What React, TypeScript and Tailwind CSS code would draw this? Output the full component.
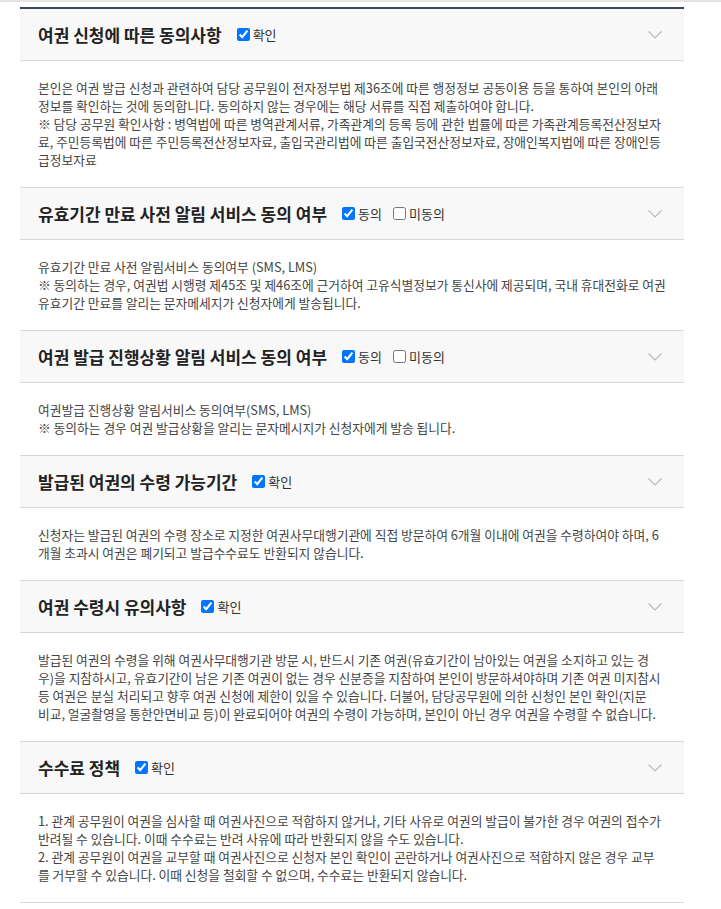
import React from "react";

type Option = { label: string; checked: boolean };

type Section = {
  title: string;
  options: Option[];
  lines: string[];
};

const sections: Section[] = [
  {
    title: "여권 신청에 따른 동의사항",
    options: [{ label: "확인", checked: true }],
    lines: [
      "본인은 여권 발급 신청과 관련하여 담당 공무원이 전자정부법 제36조에 따른 행정정보 공동이용 등을 통하여 본인의 아래",
      "정보를 확인하는 것에 동의합니다. 동의하지 않는 경우에는 해당 서류를 직접 제출하여야 합니다.",
      "※ 담당 공무원 확인사항 : 병역법에 따른 병역관계서류, 가족관계의 등록 등에 관한 법률에 따른 가족관계등록전산정보자",
      "료, 주민등록법에 따른 주민등록전산정보자료, 출입국관리법에 따른 출입국전산정보자료, 장애인복지법에 따른 장애인등",
      "급정보자료",
    ],
  },
  {
    title: "유효기간 만료 사전 알림 서비스 동의 여부",
    options: [
      { label: "동의", checked: true },
      { label: "미동의", checked: false },
    ],
    lines: [
      "유효기간 만료 사전 알림서비스 동의여부 (SMS, LMS)",
      "※ 동의하는 경우, 여권법 시행령 제45조 및 제46조에 근거하여 고유식별정보가 통신사에 제공되며, 국내 휴대전화로 여권",
      "유효기간 만료를 알리는 문자메세지가 신청자에게 발송됩니다.",
    ],
  },
  {
    title: "여권 발급 진행상황 알림 서비스 동의 여부",
    options: [
      { label: "동의", checked: true },
      { label: "미동의", checked: false },
    ],
    lines: [
      "여권발급 진행상황 알림서비스 동의여부(SMS, LMS)",
      "※ 동의하는 경우 여권 발급상황을 알리는 문자메시지가 신청자에게 발송 됩니다.",
    ],
  },
  {
    title: "발급된 여권의 수령 가능기간",
    options: [{ label: "확인", checked: true }],
    lines: [
      "신청자는 발급된 여권의 수령 장소로 지정한 여권사무대행기관에 직접 방문하여 6개월 이내에 여권을 수령하여야 하며, 6",
      "개월 초과시 여권은 폐기되고 발급수수료도 반환되지 않습니다.",
    ],
  },
  {
    title: "여권 수령시 유의사항",
    options: [{ label: "확인", checked: true }],
    lines: [
      "발급된 여권의 수령을 위해 여권사무대행기관 방문 시, 반드시 기존 여권(유효기간이 남아있는 여권을 소지하고 있는 경",
      "우)을 지참하시고, 유효기간이 남은 기존 여권이 없는 경우 신분증을 지참하여 본인이 방문하셔야하며 기존 여권 미지참시",
      "등 여권은 분실 처리되고 향후 여권 신청에 제한이 있을 수 있습니다. 더불어, 담당공무원에 의한 신청인 본인 확인(지문",
      "비교, 얼굴촬영을 통한안면비교 등)이 완료되어야 여권의 수령이 가능하며, 본인이 아닌 경우 여권을 수령할 수 없습니다.",
    ],
  },
  {
    title: "수수료 정책",
    options: [{ label: "확인", checked: true }],
    lines: [
      "1. 관계 공무원이 여권을 심사할 때 여권사진으로 적합하지 않거나, 기타 사유로 여권의 발급이 불가한 경우 여권의 접수가",
      "반려될 수 있습니다. 이때 수수료는 반려 사유에 따라 반환되지 않을 수도 있습니다.",
      "2. 관계 공무원이 여권을 교부할 때 여권사진으로 신청자 본인 확인이 곤란하거나 여권사진으로 적합하지 않은 경우 교부",
      "를 거부할 수 있습니다. 이때 신청을 철회할 수 없으며, 수수료는 반환되지 않습니다.",
    ],
  },
];

function Chevron() {
  return (
    <svg width="14" height="8" viewBox="0 0 14 8" fill="none" className="ml-auto mr-[2px]">
      <polyline points="0.5,0.5 7,7 13.5,0.5" stroke="#b3bac6" strokeWidth="1.2" />
    </svg>
  );
}

function AgreeSection({ section }: { section: Section }) {
  return (
    <div className="border-b border-[#d6d6d6]">
      {/* header */}
      <div className="flex h-[52px] items-center border-b border-[#d6d6d6] bg-[#f8f8f8] pl-[18px] pr-[20px]">
        <h3 className="text-[17px] font-bold text-[#222]">{section.title}</h3>
        <div className="ml-[15px] flex items-center gap-[11px]">
          {section.options.map((o) => (
            <label key={o.label} className="flex items-center gap-[3px] text-[13px] text-[#333]">
              <input type="checkbox" defaultChecked={o.checked} className="m-0 h-[13px] w-[13px]" />
              {o.label}
            </label>
          ))}
        </div>
        <Chevron />
      </div>

      {/* body */}
      <div className="px-[18px] py-[18px] text-[12.75px] leading-[18px] text-[#444]">
        {section.lines.map((l, i) => (
          <p key={i} className="whitespace-nowrap">
            {l}
          </p>
        ))}
      </div>
    </div>
  );
}

export default function App() {
  return (
    <div
      className="min-h-[909px] bg-white"
      style={{ fontFamily: '"Noto Sans CJK KR", "Noto Sans", sans-serif' }}
    >
      <div className="h-[2px] bg-[#e4e4e4]" />
      <div className="ml-[20px] mt-[5px] w-[664px] border-t-2 border-[#3b4663]">
        {sections.map((s) => (
          <AgreeSection key={s.title} section={s} />
        ))}
      </div>
    </div>
  );
}
